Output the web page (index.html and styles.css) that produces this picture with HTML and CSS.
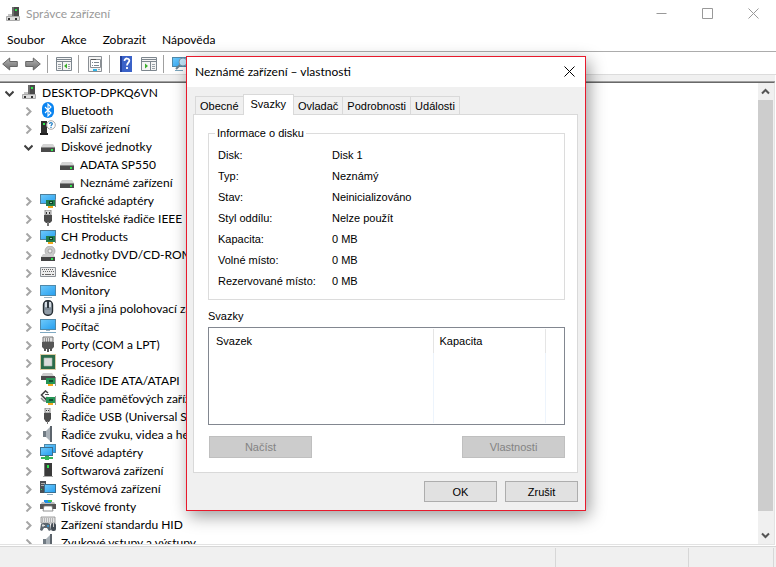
FILE: index.html
```html
<!DOCTYPE html>
<html lang="cs">
<head>
    <meta charset="UTF-8">
    <meta name="viewport" content="width=device-width, initial-scale=1.0">
    <title>Správce zařízení</title>
    <link rel="stylesheet" href="styles.css">
</head>
<body>
    <!-- shared icons -->
    <svg class="sprite" aria-hidden="true">
        <defs>
            <linearGradient id="screen" x1="0" y1="0" x2="1" y2="1">
                <stop offset="0" stop-color="#6cc8fa"/>
                <stop offset="1" stop-color="#28a0f0"/>
            </linearGradient>
            <linearGradient id="metal" x1="0" y1="0" x2="0" y2="1">
                <stop offset="0" stop-color="#b4b4b4"/>
                <stop offset="1" stop-color="#6c6c6c"/>
            </linearGradient>
        </defs>
        <symbol id="i-right" viewBox="0 0 9 9"><path d="M2.5 .5l4 4-4 4" fill="none" stroke="#a6a6a6" stroke-width="2"/></symbol>
        <symbol id="i-down" viewBox="0 0 9 9"><path d="M.5 2.5l4 4 4-4" fill="none" stroke="#404040" stroke-width="2"/></symbol>
        <symbol id="i-computer" viewBox="0 0 16 16">
            <path d="M7 1h7v10H7z" fill="#4a4a4a"/><path d="M7 1h2v10H7z" fill="#6e6e6e"/><path d="M10 3h2v2h-2z" fill="#2ee64c"/>
            <path d="M3 8h4v2H3z" fill="#c4c4c4"/><path d="M1.500 10.500h13v4h-13z" fill="#dcdcdc" stroke="#aaa"/>
            <path d="M3 12h2v2H3zM10 12h2v2h-2z" fill="#333"/>
        </symbol>
        <symbol id="i-bluetooth" viewBox="0 0 16 16">
            <rect x="2" width="12" height="16" rx="6" fill="#0a84f0"/>
            <path d="M5 5l6 6-3 3V2l3 3-6 6" fill="none" stroke="#fff" stroke-width="1.1"/>
        </symbol>
        <symbol id="i-other" viewBox="0 0 16 16">
            <path d="M1 1h6v13H1z" fill="#303030"/><path d="M0 13h8v2H0z" fill="#222"/><path d="M3 3h2v2H3z" fill="#2ee64c"/>
            <circle cx="11" cy="5" r="4.300" fill="#fff" stroke="#a8a8a8"/>
            <path d="M9.500 4c0-2 3-1.600 2.800-.2C12.200 4.800 11 4.700 11 6.200M11 7v1" fill="none" stroke="#1d7dc4" stroke-width="1.200"/>
        </symbol>
        <symbol id="i-disk" viewBox="0 0 16 16">
            <path d="M3 6h10l2 3H1z" fill="#d4d4d4"/><path d="M1 9h14v5H1z" fill="#4a4a4a"/><path d="M1 9h14v1H1z" fill="#888"/>
            <path d="M11 11h2v2h-2z" fill="#2ee64c"/>
        </symbol>
        <symbol id="i-gpu" viewBox="0 0 16 16">
            <path d="M0 2h16v10H0z" fill="#4f7f9a"/><path d="M1 3h14v8H1z" fill="url(#screen)"/>
            <path d="M6 8h10v6H6z" fill="#1f7d4c"/><path d="M15 7h1v8h-1z" fill="#888"/><path d="M9 9h4v3H9z" fill="#0f3f2a"/><path d="M10 10h2v1h-2z" fill="#8fd0a0"/>
            <path d="M8 14h5v2H8z" fill="#f0a81c"/>
        </symbol>
        <symbol id="i-plug" viewBox="0 0 16 16">
            <path d="M5 0h6v5H5z" fill="#d8d8d8" stroke="#777" stroke-width=".8"/><path d="M6 2h1v2H6zM9 2h1v2H9z" fill="#333"/>
            <path d="M4 5h8v6l-2 2H6l-2-2z" fill="#4c4c4c"/><path d="M7 12h2v4H7z" fill="#777"/>
        </symbol>
        <symbol id="i-dvd" viewBox="0 0 16 16">
            <circle cx="10" cy="5" r="5" fill="#c8c8c8" stroke="#999" stroke-width=".6"/><circle cx="10" cy="5" r="2" fill="#eee" stroke="#888" stroke-width=".7"/>
            <path d="M3 8h10l2 3H1z" fill="#ccc"/><path d="M1 11h14v4H1z" fill="#444"/><path d="M11 12h2v2h-2z" fill="#2ee64c"/>
        </symbol>
        <symbol id="i-keyboard" viewBox="0 0 16 16">
            <path d="M.5 3.500h15v9H.5z" fill="#ececec" stroke="#8c9298"/>
            <path d="M2 5.500h12M3 7.500h12" stroke="#666" stroke-dasharray="1 1"/><path d="M2 10.500h2M5 10.500h6M12 10.500h2" stroke="#666"/>
        </symbol>
        <symbol id="i-monitor" viewBox="0 0 16 16">
            <path d="M0 3h16v11H0z" fill="#4f89aa"/><path d="M1 4h14v9H1z" fill="url(#screen)"/><path d="M4 15h8v1H4z" fill="#9ab4c4"/>
        </symbol>
        <symbol id="i-pc" viewBox="0 0 16 16">
            <path d="M0 1h16v11H0z" fill="#4f89aa"/><path d="M1 2h14v9H1z" fill="url(#screen)"/>
            <path d="M6 12h4v1H6z" fill="#9ab4c4"/><path d="M0 14h16v1H0z" fill="#7fa9c2"/>
        </symbol>
        <symbol id="i-mouse" viewBox="0 0 16 16">
            <rect x="3.500" y=".7" width="9" height="14.600" rx="4" fill="#8f9ba6" stroke="#262d33" stroke-width="1.400"/>
            <path d="M5 2h6v5H5z" fill="#d4dbe2"/><path d="M7 1h2v7H7z" fill="#303840"/><path d="M4.500 9h7" stroke="#6c7884"/>
        </symbol>
        <symbol id="i-port" viewBox="0 0 16 16">
            <path d="M3 1h10v5H3z" fill="#ddd" stroke="#777"/><path d="M5 3h6M5 5h6" stroke="#444" stroke-dasharray="1 1"/>
            <path d="M2 6h12v5l-2 2H4l-2-2z" fill="#565656"/><path d="M4 13h2v2H4zM7 12h2v4H7zM10 13h2v2h-2z" fill="#555"/>
        </symbol>
        <symbol id="i-cpu" viewBox="0 0 16 16">
            <path d="M.5 .5h15v15H.5z" fill="none" stroke="#b89848" stroke-dasharray="1 1"/>
            <path d="M1 1h14v14H1z" fill="#2c6b4a"/><path d="M4 4h8v8H4z" fill="#dcdcdc" stroke="#a8b8ac" stroke-width=".6"/>
        </symbol>
        <symbol id="i-ide" viewBox="0 0 16 16">
            <path d="M3 1h9l2 3H1z" fill="#ccc"/><path d="M1 4h14v4H1z" fill="#4a4a4a"/>
            <path d="M6 6h10v6H6z" fill="#259455"/><path d="M15 5h1v9h-1z" fill="#999"/><path d="M9 8h4v2H9z" fill="#0f4f32"/><path d="M8 12h5v2H8z" fill="#f0a81c"/>
        </symbol>
        <symbol id="i-storage" viewBox="0 0 16 16">
            <path d="M8 3L5.500 1 1.500 5l4 4 2-2" fill="none" stroke="#444" stroke-width="1.600"/><path d="M5 4h4v1H5z" fill="#555"/><path d="M1 8l3 3h3" fill="none" stroke="#888" stroke-width="1.500"/>
            <path d="M6 7h10v6H6z" fill="#259455"/><path d="M15 6h1v9h-1z" fill="#999"/><path d="M9 9h4v2H9z" fill="#0f4f32"/><path d="M8 13h5v2H8z" fill="#f0a81c"/>
        </symbol>
        <symbol id="i-usb" viewBox="0 0 16 16">
            <path d="M5 0h5v5H5z" fill="#ddd" stroke="#777" stroke-width=".8"/><path d="M6 2h1v1H6zM8 2h1v1H8z" fill="#333"/>
            <path d="M4 5h7v6l-2 3H6l-2-3z" fill="#4c4c4c"/><path d="M7 13h1v3H7z" fill="#777"/>
        </symbol>
        <symbol id="i-speaker" viewBox="0 0 16 16">
            <path d="M3 5h3v6H3z" fill="#707a82"/><path d="M6 5l4-4v14l-4-4z" fill="#a9b1b8"/><path d="M10 0h2v16h-2z" fill="#5c646c"/>
        </symbol>
        <symbol id="i-network" viewBox="0 0 16 16">
            <path d="M4 0h12v9H4z" fill="#4f89aa"/><path d="M5 1h10v7H5z" fill="url(#screen)"/>
            <path d="M0 3h13v9H0z" fill="#3b6f90"/><path d="M1 4h11v7H1z" fill="url(#screen)"/>
            <path d="M1 14h12" stroke="#35b558" stroke-width="2"/><path d="M5 12h4v4H5z" fill="#35b558"/>
        </symbol>
        <symbol id="i-software" viewBox="0 0 16 16">
            <path d="M4 1h8v14H4z" fill="#3a3a3a"/><path d="M4 1h1v14H4z" fill="#777"/><path d="M7 3h2v3H7z" fill="#2ee64c"/><path d="M3 14h10v1H3z" fill="#aaa"/>
        </symbol>
        <symbol id="i-system" viewBox="0 0 16 16">
            <path d="M0 1h6v12H0z" fill="#4a4f54"/><path d="M1 3.500h4M1 5.500h3" stroke="#aaa"/><path d="M1 9h1v1H1z" fill="#2ee64c"/>
            <path d="M4 4h12v9H4z" fill="#3b6f90"/><path d="M5 5h10v7H5z" fill="url(#screen)"/><path d="M7 14h6v1H7z" fill="#8fabbd"/>
        </symbol>
        <symbol id="i-printer" viewBox="0 0 16 16">
            <path d="M4 2h8v3H4z" fill="#1e90e8"/><path d="M8 2h4v2H8z" fill="#3dbf56"/><path d="M2 4h12l2 3H0z" fill="#bbb"/><path d="M5 4h6v1H5z" fill="#1e90e8"/>
            <path d="M0 6h16v5H0z" fill="#555"/><path d="M4 8h8l1 5H3z" fill="#fff" stroke="#777" stroke-width=".8"/>
        </symbol>
        <symbol id="i-hid" viewBox="0 0 16 16">
            <path d="M1 1h14v6H1z" fill="#e4e4e4" stroke="#888" stroke-width=".8"/><path d="M2 3h12M2 5h12" stroke="#888" stroke-dasharray="1 1"/>
            <path d="M0 14l1-6 2-1h5l2 1 1 6-2 1-2-3H4l-2 3z" fill="#5d666e"/><path d="M3 8v3M2 9.500h3" stroke="#ddd"/><circle cx="8" cy="10" r="1" fill="#3aa0e0"/>
            <rect x="11" y="7" width="5" height="8" rx="2" fill="#454d55"/><path d="M13 7h1v4h-1z" fill="#ccc"/>
        </symbol>
    </svg>

    <main class="window">
        <header class="titlebar">
            <svg class="icon"><use href="#i-computer"/></svg>
            <h1>Správce zařízení</h1>
            <button class="caption" aria-label="Minimalizovat"><svg viewBox="0 0 11 11"><path d="M.5 5.500h10"/></svg></button>
            <button class="caption" aria-label="Maximalizovat"><svg viewBox="0 0 11 11"><path d="M.5 .5h10v10H.5z"/></svg></button>
            <button class="caption" aria-label="Zavřít"><svg viewBox="0 0 11 11"><path d="M.5 .5l10 10M10.500 .5l-10 10"/></svg></button>
        </header>

        <nav class="menubar">
            <button>Soubor</button>
            <button>Akce</button>
            <button>Zobrazit</button>
            <button>Nápověda</button>
        </nav>

        <div class="toolbar">
            <button aria-label="Zpět"><svg class="icon" viewBox="0 0 16 16"><path d="M.7 8l7-6v3.500h7.600v5H7.700V14z" fill="url(#metal)" stroke="#666"/></svg></button>
            <button aria-label="Vpřed"><svg class="icon" viewBox="0 0 16 16"><path d="M15.300 8l-7-6v3.500H.7v5h7.600V14z" fill="url(#metal)" stroke="#666"/></svg></button>
            <span class="sep"></span>
            <button aria-label="Strom konzoly"><svg class="icon" viewBox="0 0 16 16"><path d="M.5 1.500h15v13H.5z" fill="#f4f4f4" stroke="#7d868e"/><path d="M1 3.500h14M1 5.500h14M6.500 6v8" stroke="#7d868e"/><path d="M2 8.500h3M2 10.500h3M2 12.500h3M12 8.500h2M12 10.500h2M12 12.500h2" stroke="#9aa2a8"/><path d="M11 7.500v5L8 10z" fill="#3aae2a"/></svg></button>
            <span class="sep"></span>
            <button aria-label="Vlastnosti"><svg class="icon" viewBox="0 0 16 16"><path d="M1.500 .5h13v15h-13z" fill="#f4f4f4" stroke="#8a8f94"/><path d="M3.500 3.500h10v8h-10z" fill="#fff" stroke="#8a8f94"/><path d="M4 3.500h5" stroke="#555"/><path d="M5 6.500h1M7 6.500h5M5 9.500h1M7 9.500h5" stroke="#7d868e"/><path d="M6 14h4" stroke="#2fb5e8" stroke-width="2"/><path d="M11 13.500h2" stroke="#aaa"/></svg></button>
            <span class="sep"></span>
            <button aria-label="Nápověda"><svg class="icon" viewBox="0 0 16 16"><path d="M2 0h12v16H2z" fill="#3a62c8"/><path d="M2 0h2v16H2z" fill="#22409a"/><path d="M6.500 5c0-3.500 5-3 4.800-.3C11.200 6.500 9 6.800 9 9.500M9 11v2" fill="none" stroke="#fff" stroke-width="1.800"/></svg></button>
            <button aria-label="Podokno akcí"><svg class="icon" viewBox="0 0 16 16"><path d="M.5 1.500h15v13H.5z" fill="#f4f4f4" stroke="#7d868e"/><path d="M1 3.500h14M1 5.500h14M9.500 6v8" stroke="#7d868e"/><path d="M11 8.500h3M11 10.500h3M11 12.500h3" stroke="#9aa2a8"/><path d="M4 7.500v5L7 10z" fill="#3aae2a"/></svg></button>
            <span class="sep"></span>
            <button aria-label="Vyhledat změny hardwaru"><svg class="icon" viewBox="0 0 16 16"><path d="M0 1h16v10H0z" fill="#4f89aa"/><path d="M1 2h14v8H1z" fill="url(#screen)"/><path d="M3 14h8v1H3z" fill="#78a4bc"/><circle cx="11" cy="6" r="4" fill="#bfe4f8" stroke="#7a98aa"/><path d="M8 9l-4 4" stroke="#6b7f8c" stroke-width="2"/></svg></button>
        </div>

        <div class="content">
            <ul class="tree">
                <li><div class="node"><svg class="chevron"><use href="#i-down"/></svg><svg class="icon"><use href="#i-computer"/></svg>DESKTOP-DPKQ6VN</div>
                    <ul>
                        <li><div class="node"><svg class="chevron"><use href="#i-right"/></svg><svg class="icon"><use href="#i-bluetooth"/></svg>Bluetooth</div></li>
                        <li><div class="node"><svg class="chevron"><use href="#i-right"/></svg><svg class="icon"><use href="#i-other"/></svg>Další zařízení</div></li>
                        <li><div class="node"><svg class="chevron"><use href="#i-down"/></svg><svg class="icon"><use href="#i-disk"/></svg>Diskové jednotky</div>
                            <ul>
                                <li><div class="node leaf"><svg class="icon"><use href="#i-disk"/></svg>ADATA SP550</div></li>
                                <li><div class="node leaf"><svg class="icon"><use href="#i-disk"/></svg>Neznámé zařízení</div></li>
                            </ul>
                        </li>
                        <li><div class="node"><svg class="chevron"><use href="#i-right"/></svg><svg class="icon"><use href="#i-gpu"/></svg>Grafické adaptéry</div></li>
                        <li><div class="node"><svg class="chevron"><use href="#i-right"/></svg><svg class="icon"><use href="#i-plug"/></svg>Hostitelské řadiče IEEE 1394</div></li>
                        <li><div class="node"><svg class="chevron"><use href="#i-right"/></svg><svg class="icon"><use href="#i-gpu"/></svg>CH Products</div></li>
                        <li><div class="node"><svg class="chevron"><use href="#i-right"/></svg><svg class="icon"><use href="#i-dvd"/></svg>Jednotky DVD/CD-ROM</div></li>
                        <li><div class="node"><svg class="chevron"><use href="#i-right"/></svg><svg class="icon"><use href="#i-keyboard"/></svg>Klávesnice</div></li>
                        <li><div class="node"><svg class="chevron"><use href="#i-right"/></svg><svg class="icon"><use href="#i-monitor"/></svg>Monitory</div></li>
                        <li><div class="node"><svg class="chevron"><use href="#i-right"/></svg><svg class="icon"><use href="#i-mouse"/></svg>Myši a jiná polohovací zařízení</div></li>
                        <li><div class="node"><svg class="chevron"><use href="#i-right"/></svg><svg class="icon"><use href="#i-pc"/></svg>Počítač</div></li>
                        <li><div class="node"><svg class="chevron"><use href="#i-right"/></svg><svg class="icon"><use href="#i-port"/></svg>Porty (COM a LPT)</div></li>
                        <li><div class="node"><svg class="chevron"><use href="#i-right"/></svg><svg class="icon"><use href="#i-cpu"/></svg>Procesory</div></li>
                        <li><div class="node"><svg class="chevron"><use href="#i-right"/></svg><svg class="icon"><use href="#i-ide"/></svg>Řadiče IDE ATA/ATAPI</div></li>
                        <li><div class="node"><svg class="chevron"><use href="#i-right"/></svg><svg class="icon"><use href="#i-storage"/></svg>Řadiče paměťových zařízení</div></li>
                        <li><div class="node"><svg class="chevron"><use href="#i-right"/></svg><svg class="icon"><use href="#i-usb"/></svg>Řadiče USB (Universal Serial Bus)</div></li>
                        <li><div class="node"><svg class="chevron"><use href="#i-right"/></svg><svg class="icon"><use href="#i-speaker"/></svg>Řadiče zvuku, videa a her</div></li>
                        <li><div class="node"><svg class="chevron"><use href="#i-right"/></svg><svg class="icon"><use href="#i-network"/></svg>Síťové adaptéry</div></li>
                        <li><div class="node"><svg class="chevron"><use href="#i-right"/></svg><svg class="icon"><use href="#i-software"/></svg>Softwarová zařízení</div></li>
                        <li><div class="node"><svg class="chevron"><use href="#i-right"/></svg><svg class="icon"><use href="#i-system"/></svg>Systémová zařízení</div></li>
                        <li><div class="node"><svg class="chevron"><use href="#i-right"/></svg><svg class="icon"><use href="#i-printer"/></svg>Tiskové fronty</div></li>
                        <li><div class="node"><svg class="chevron"><use href="#i-right"/></svg><svg class="icon"><use href="#i-hid"/></svg>Zařízení standardu HID</div></li>
                        <li><div class="node"><svg class="chevron"><use href="#i-right"/></svg><svg class="icon"><use href="#i-speaker"/></svg>Zvukové vstupy a výstupy</div></li>
                    </ul>
                </li>
            </ul>
            <div class="scrollbar">
                <button aria-label="Nahoru"><svg viewBox="0 0 9 9"><path d="M1 6.500L4.500 3 8 6.500"/></svg></button>
                <div class="thumb"></div>
                <button aria-label="Dolů"><svg viewBox="0 0 9 9"><path d="M1 2.500L4.500 6 8 2.500"/></svg></button>
            </div>
        </div>

        <footer class="statusbar">
            <span></span>
            <span></span>
            <span></span>
        </footer>
    </main>

    <section class="dialog" role="dialog" aria-labelledby="dialog-title">
        <header class="dialog-title">
            <h2 id="dialog-title">Neznámé zařízení – vlastnosti</h2>
            <button aria-label="Zavřít"><svg viewBox="0 0 11 11"><path d="M.5 .5l10 10M10.500 .5l-10 10"/></svg></button>
        </header>
        <div class="dialog-body">
            <div class="tabs" role="tablist">
                <button role="tab">Obecné</button>
                <button role="tab" class="active" aria-selected="true">Svazky</button>
                <button role="tab">Ovladač</button>
                <button role="tab">Podrobnosti</button>
                <button role="tab">Události</button>
            </div>
            <div class="panel">
                <fieldset>
                    <legend>Informace o disku</legend>
                    <dl>
                        <dt>Disk:</dt><dd>Disk 1</dd>
                        <dt>Typ:</dt><dd>Neznámý</dd>
                        <dt>Stav:</dt><dd>Neinicializováno</dd>
                        <dt>Styl oddílu:</dt><dd>Nelze použít</dd>
                        <dt>Kapacita:</dt><dd>0 MB</dd>
                        <dt>Volné místo:</dt><dd>0 MB</dd>
                        <dt>Rezervované místo:</dt><dd>0 MB</dd>
                    </dl>
                </fieldset>
                <div class="list-label" id="volumes">Svazky</div>
                <div class="list">
                    <table aria-labelledby="volumes">
                        <thead>
                            <tr><th class="col-volume">Svazek</th><th class="col-size">Kapacita</th><th></th></tr>
                        </thead>
                        <tbody>
                            <tr><td></td><td></td><td></td></tr>
                        </tbody>
                    </table>
                </div>
                <div class="panel-buttons">
                    <button disabled>Načíst</button>
                    <button disabled>Vlastnosti</button>
                </div>
            </div>
            <div class="dialog-buttons">
                <button>OK</button>
                <button>Zrušit</button>
            </div>
        </div>
    </section>
</body>
</html>
```
FILE: styles.css
```css
* {
    box-sizing: border-box;
}
body {
    margin: 0;
    font-family: Lato, "Open Sans", sans-serif;
    font-size: 12px;
    color: #000;
    background: #fff;
}
button {
    margin: 0;
    padding: 0;
    border: none;
    background: none;
    font: inherit;
    color: inherit;
}
h1, h2 {
    margin: 0;
    font-size: 12px;
    font-weight: normal;
}
ul {
    margin: 0;
    padding: 0;
    list-style: none;
}
svg {
    display: block;
    flex: none;
}
.sprite {
    position: absolute;
    width: 0;
    height: 0;
}
.icon {
    width: 16px;
    height: 16px;
}

/* main window */
.window {
    display: flex;
    flex-direction: column;
    height: 100vh;
    overflow: hidden;
}
.titlebar {
    display: flex;
    align-items: center;
    height: 27px;
    padding-left: 5px;
    color: #999;
}
.titlebar h1 {
    flex: 1;
    padding-left: 5px;
}
.caption {
    display: flex;
    align-items: center;
    justify-content: center;
    width: 46px;
    height: 27px;
}
.caption svg, .dialog-title svg {
    width: 11px;
    height: 11px;
    fill: none;
    stroke: #999;
}
.menubar {
    display: flex;
    gap: 16px;
    height: 25px;
    padding-left: 7px;
    border-bottom: 1px solid #acacac;
}
.toolbar {
    display: flex;
    align-items: center;
    gap: 7px;
    height: 23px;
    padding: 2px 0 0 2px;
    border-bottom: 1px solid #dcdcdc;
}
.sep {
    width: 1px;
    height: 18px;
    margin: 0 1px 0 -1px;
    background: #a0a0a0;
}
.content {
    flex: 1;
    display: flex;
    min-height: 0;
    margin: 7px 1px 0 0;
    border: solid #e3e3e3;
    border-width: 1px 1px 1px 0;
    border-top-color: #696969;
    box-shadow: 0 -1px #a0a0a0, 0 -7px #f0f0f0;
}
.tree {
    flex: 1;
    min-width: 0;
    overflow: hidden;
}
.tree ul {
    padding-left: 19px;
}
.node {
    display: flex;
    align-items: center;
    height: 18px;
    white-space: nowrap;
}
.node .chevron {
    width: 9px;
    height: 9px;
    margin: 2px 7px 0 5px;
}
.node .icon {
    margin-right: 5px;
}
.node.leaf {
    padding-left: 21px;
}
.scrollbar {
    display: flex;
    flex-direction: column;
    width: 16px;
    padding-right: 1px;
    background: #f0f0f0;
}
.scrollbar button {
    display: flex;
    align-items: center;
    justify-content: center;
    height: 17px;
}
.scrollbar svg {
    width: 9px;
    height: 9px;
    fill: none;
    stroke: #555;
    stroke-width: 2;
}
.scrollbar .thumb {
    flex: 1;
    margin-bottom: 16px;
    background: #cdcdcd;
}
.statusbar {
    display: flex;
    justify-content: flex-end;
    height: 21px;
    margin-top: 1px;
    padding: 1px 2px 0 0;
    border-top: 1px solid #d7d7d7;
    background: #f0f0f0;
}
.statusbar span {
    border-right: 1px solid #d7d7d7;
}
.statusbar span:first-child {
    flex: 1;
}
.statusbar span:nth-child(2) {
    width: 133px;
}
.statusbar span:last-child {
    width: 85px;
}

/* properties dialog */
.dialog {
    position: absolute;
    top: 56px;
    left: 186px;
    width: 400px;
    border: 1px solid #e81a2c;
    background: #f0f0f0;
    box-shadow: 3px 5px 16px rgba(0, 0, 0, 0.4);
}
.dialog-title {
    display: flex;
    align-items: center;
    justify-content: space-between;
    height: 30px;
    padding: 0 10px 2px 8px;
    background: #fff;
}
.dialog-title svg {
    stroke: #000;
}
.dialog-body {
    padding: 7px 7px 8px 6px;
    font-family: "Liberation Sans", Arial, sans-serif;
    font-size: 11px;
}
.tabs {
    display: flex;
    align-items: flex-end;
    height: 20px;
    padding-left: 2px;
}
.tabs button {
    height: 18px;
    padding: 0 4px;
    border: 1px solid #d9d9d9;
    border-left: none;
    border-bottom: none;
}
.tabs button:first-child {
    border-left: 1px solid #d9d9d9;
}
.tabs .active {
    z-index: 1;
    height: 21px;
    margin: 0 0 -1px -1px;
    padding: 0 7px 2px;
    border-left: 1px solid #d9d9d9;
    background: #fff;
}
.panel {
    padding: 12px 12px 14px 14px;
    border: 1px solid #d9d9d9;
    background: #fff;
}
fieldset {
    margin: 0;
    padding: 5px 9px 7px;
    border: 1px solid #dcdcdc;
}
legend {
    margin-left: -3px;
    padding: 0 2px;
    line-height: 13px;
}
dl {
    display: grid;
    grid-template-columns: 114px 1fr;
    margin: 0;
    line-height: 21px;
}
dd {
    margin: 0;
}
.list-label {
    padding: 8px 0 3px;
    line-height: 16px;
}
.list {
    height: 98px;
    padding: 1px;
    border: 1px solid #828790;
}
.list table {
    width: 100%;
    height: 100%;
    border-collapse: collapse;
    table-layout: fixed;
}
.list th {
    height: 24px;
    padding: 0 6px;
    border-right: 1px solid #e5e5e5;
    font-weight: normal;
    text-align: left;
}
.list td {
    border-right: 1px solid #edf4fc;
}
.list th:last-child, .list td:last-child {
    width: 18px;
    border-right: none;
}
.list .col-size {
    width: 112px;
}
.panel-buttons {
    display: flex;
    justify-content: space-between;
    padding: 11px 0 0 1px;
}
.panel-buttons button {
    width: 103px;
    height: 22px;
    border: 1px solid #bfbfbf;
    background: #ccc;
    color: #838383;
}
.dialog-buttons {
    display: flex;
    justify-content: flex-end;
    gap: 8px;
    padding-top: 8px;
}
.dialog-buttons button {
    width: 73px;
    height: 21px;
    border: 1px solid #adadad;
    background: #e1e1e1;
}
```
